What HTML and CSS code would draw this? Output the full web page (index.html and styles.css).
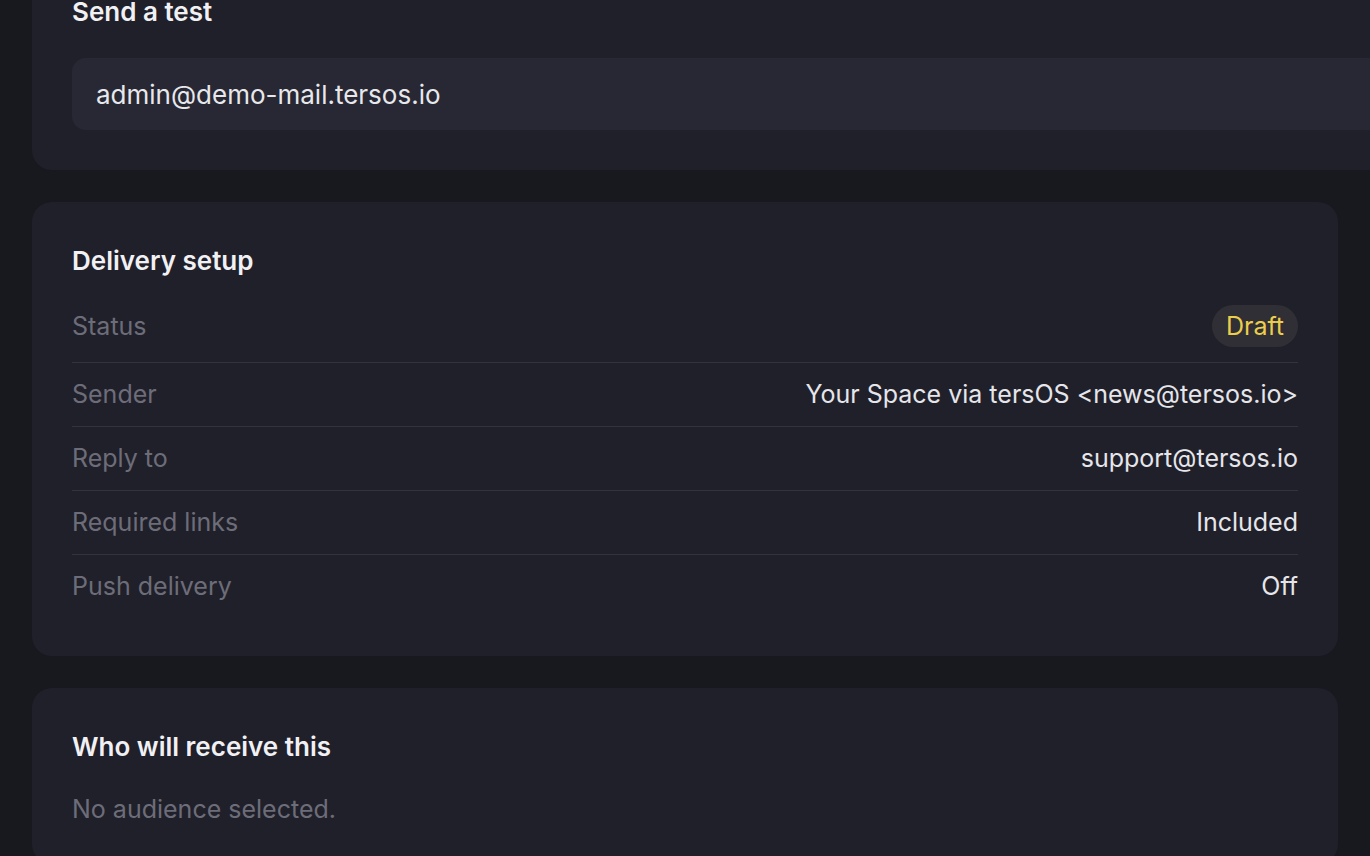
FILE: index.html
```html
<!DOCTYPE html>
<html lang="en">
<head>
<meta charset="utf-8">
<title>Campaign review</title>
<link rel="stylesheet" href="styles.css">
</head>
<body>
<main class="page">
  <section class="card card-wide">
    <h2 class="card-title">Send a test</h2>
    <div class="field">admin@demo-mail.tersos.io</div>
  </section>

  <section class="card">
    <h2 class="card-title">Delivery setup</h2>
    <dl class="rows">
      <div class="row">
        <dt class="label">Status</dt>
        <dd class="value"><span class="badge">Draft</span></dd>
      </div>
      <div class="row">
        <dt class="label">Sender</dt>
        <dd class="value">Your Space via tersOS &lt;news@tersos.io&gt;</dd>
      </div>
      <div class="row">
        <dt class="label">Reply to</dt>
        <dd class="value">support@tersos.io</dd>
      </div>
      <div class="row">
        <dt class="label">Required links</dt>
        <dd class="value">Included</dd>
      </div>
      <div class="row">
        <dt class="label">Push delivery</dt>
        <dd class="value">Off</dd>
      </div>
    </dl>
  </section>

  <section class="card">
    <h2 class="card-title">Who will receive this</h2>
    <p class="muted">No audience selected.</p>
  </section>
</main>
</body>
</html>
```

FILE: styles.css
```css
* { box-sizing: border-box; }
html, body {
  margin: 0;
  padding: 0;
  background: #18181f;
  overflow: hidden;
}
body {
  font-family: Inter, "Noto Sans", sans-serif;
  color: #e6e6ea;
  -webkit-font-smoothing: antialiased;
}
.page {
  width: 1370px;
  padding: 0 32px;
  display: flex;
  flex-direction: column;
  gap: 32px;
  margin-top: -47px;
}
.card {
  background: #20202a;
  border-radius: 20px;
  padding: 40px 40px 38px;
}
.card-wide {
  width: calc(100% + 160px);
  padding-bottom: 40px;
}
.card-title {
  margin: 0;
  font-size: 26px;
  line-height: 38px;
  font-weight: 600;
  color: #f1f1f4;
}
.card-wide .card-title { margin-bottom: 27px; }
.field {
  background: #272834;
  border-radius: 14px;
  height: 72px;
  display: flex;
  align-items: center;
  padding: 0 24px;
  font-size: 26px;
  color: #e8e8ec;
}
.rows {
  margin: 10px 0 0;
  padding: 0;
}
.row {
  display: flex;
  justify-content: space-between;
  align-items: center;
  padding: 15px 0;
  border-bottom: 1px solid #33333c;
}
.row:last-child { border-bottom: none; }
.label, .value {
  margin: 0;
  font-size: 25px;
  line-height: 33px;
}
.label { color: #6d6d79; }
.value { color: #e6e6ea; text-align: right; }
.badge {
  display: inline-flex;
  align-items: center;
  height: 42px;
  padding: 0 14px;
  border-radius: 21px;
  background: #2f2f35;
  color: #ecce4c;
  font-size: 25px;
}
.muted {
  margin: 27px 0 0;
  font-size: 25px;
  line-height: 33px;
  color: #6d6d79;
}
```
